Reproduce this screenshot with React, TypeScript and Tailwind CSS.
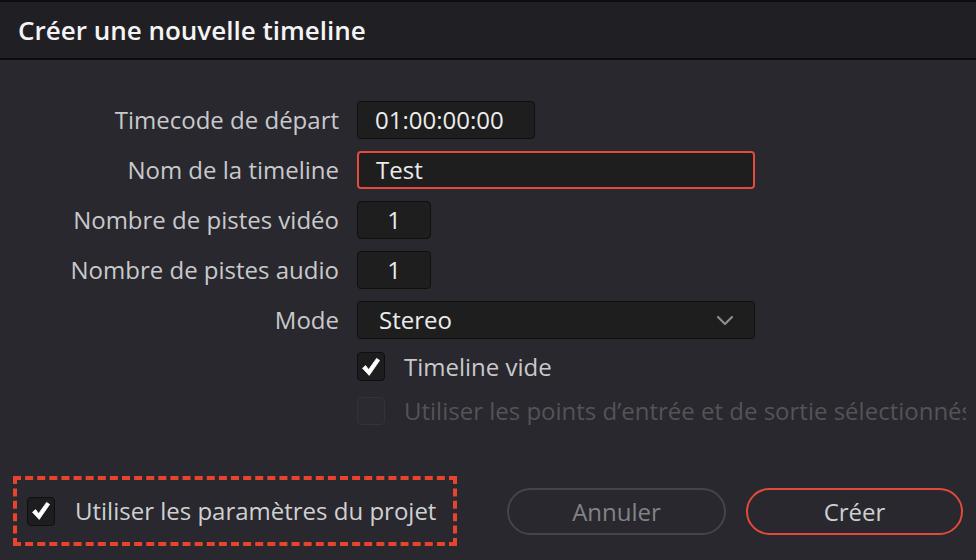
import type { ReactNode } from "react";

const font = { fontFamily: '"Open Sans", "Noto Sans", sans-serif' };

function Check({ checked, disabled }: { checked?: boolean; disabled?: boolean }) {
  return (
    <span
      className={
        disabled
          ? "flex h-[28px] w-[28px] shrink-0 items-center justify-center rounded-[4px] border border-[#34333a] bg-[#2a2a30]"
          : "flex h-[29px] w-[28px] shrink-0 items-center justify-center rounded-[4px] border border-[#0f0f10] bg-[#1d1d1f]"
      }
    >
      {checked ? (
        <svg width="20" height="20" viewBox="0 0 20 20">
          <path
            d="M1.5 11.2 L4.6 8.6 L7.6 12.6 L15.6 1.4 L18.6 3.4 L8.2 18.4 Z"
            fill="white"
            stroke="white"
            strokeWidth="0.8"
            strokeLinejoin="round"
          />
        </svg>
      ) : null}
    </span>
  );
}

function Row({ label, children }: { label: string; children: ReactNode }) {
  return (
    <>
      <div className="flex h-[38px] items-center justify-end text-[24px] leading-none text-[#c9c9cb]">{label}</div>
      <div className="flex h-[38px] items-center">{children}</div>
    </>
  );
}

function Field({ value, className, center }: { value: string; className: string; center?: boolean }) {
  return (
    <div
      className={`flex h-[38px] items-center rounded-[4px] bg-[#1e1e1f] text-[24px] leading-none text-[#ececec] ${
        center ? "justify-center" : "px-[17px]"
      } ${className}`}
    >
      {value}
    </div>
  );
}

export default function App() {
  return (
    <div className="flex h-[560px] w-[976px] flex-col overflow-hidden bg-[#28282e]" style={font}>
      <div className="h-[2px] bg-[#0d0d0f]" />
      <div className="flex h-[56px] items-center bg-[#202024] px-[18px] text-[26px] font-semibold leading-none text-[#f4f4f4]">
        Créer une nouvelle timeline
      </div>
      <div className="h-[2px] bg-[#0d0d0f]" />

      <div className="grid grid-cols-[339px_1fr] gap-x-[18px] gap-y-[12px] pr-[10px] pt-[41px]">
        <Row label="Timecode de départ">
          <Field value="01:00:00:00" className="w-[178px] border border-[#0f0f10]" />
        </Row>
        <Row label="Nom de la timeline">
          <Field value="Test" className="w-[398px] border-2 border-[#e24a3b]" />
        </Row>
        <Row label="Nombre de pistes vidéo">
          <Field value="1" center className="w-[74px] border border-[#0f0f10]" />
        </Row>
        <Row label="Nombre de pistes audio">
          <Field value="1" center className="w-[74px] border border-[#0f0f10]" />
        </Row>
        <Row label="Mode">
          <div className="flex h-[38px] w-[398px] items-center justify-between rounded-[4px] border border-[#0f0f10] bg-[#1e1e1f] pl-[21px] pr-[20px] text-[24px] leading-none text-[#ececec]">
            <span>Stereo</span>
            <svg width="18" height="12" viewBox="0 0 18 12" fill="none">
              <path d="M2 3 L9 10 L16 3" stroke="#8c8c8f" strokeWidth="2.2" strokeLinecap="round" strokeLinejoin="round" />
            </svg>
          </div>
        </Row>
        <div />
        <div className="flex flex-col gap-[15px] overflow-hidden pt-[1px]">
          <label className="flex h-[29px] items-center gap-[19px] text-[24px] leading-none text-[#c9c9cb]">
            <Check checked />
            <span>Timeline vide</span>
          </label>
          <label className="flex h-[29px] items-center gap-[19px] whitespace-nowrap text-[24px] leading-none text-[#545358]">
            <Check disabled />
            <span>Utiliser les points d’entrée et de sortie sélectionnés</span>
          </label>
        </div>
      </div>

      <div className="mt-auto flex items-end justify-between pb-[14px] pl-[13px] pr-[13px]">
        <div className="flex h-[70px] w-[444px] items-center gap-[20px] border-4 border-dashed border-[#e8432c] pl-[10px]">
          <Check checked />
          <span className="text-[24px] leading-none text-[#d0d0d2]">Utiliser les paramètres du projet</span>
        </div>
        <div className="mb-[11px] flex gap-[20px]">
          <button className="h-[47px] w-[219px] rounded-full border-2 border-[#44444a] text-[24px] leading-none text-[#828287]">
            Annuler
          </button>
          <button className="h-[47px] w-[217px] rounded-full border-2 border-[#e24a3b] text-[24px] leading-none text-[#cfcfd1]">
            Créer
          </button>
        </div>
      </div>
    </div>
  );
}
